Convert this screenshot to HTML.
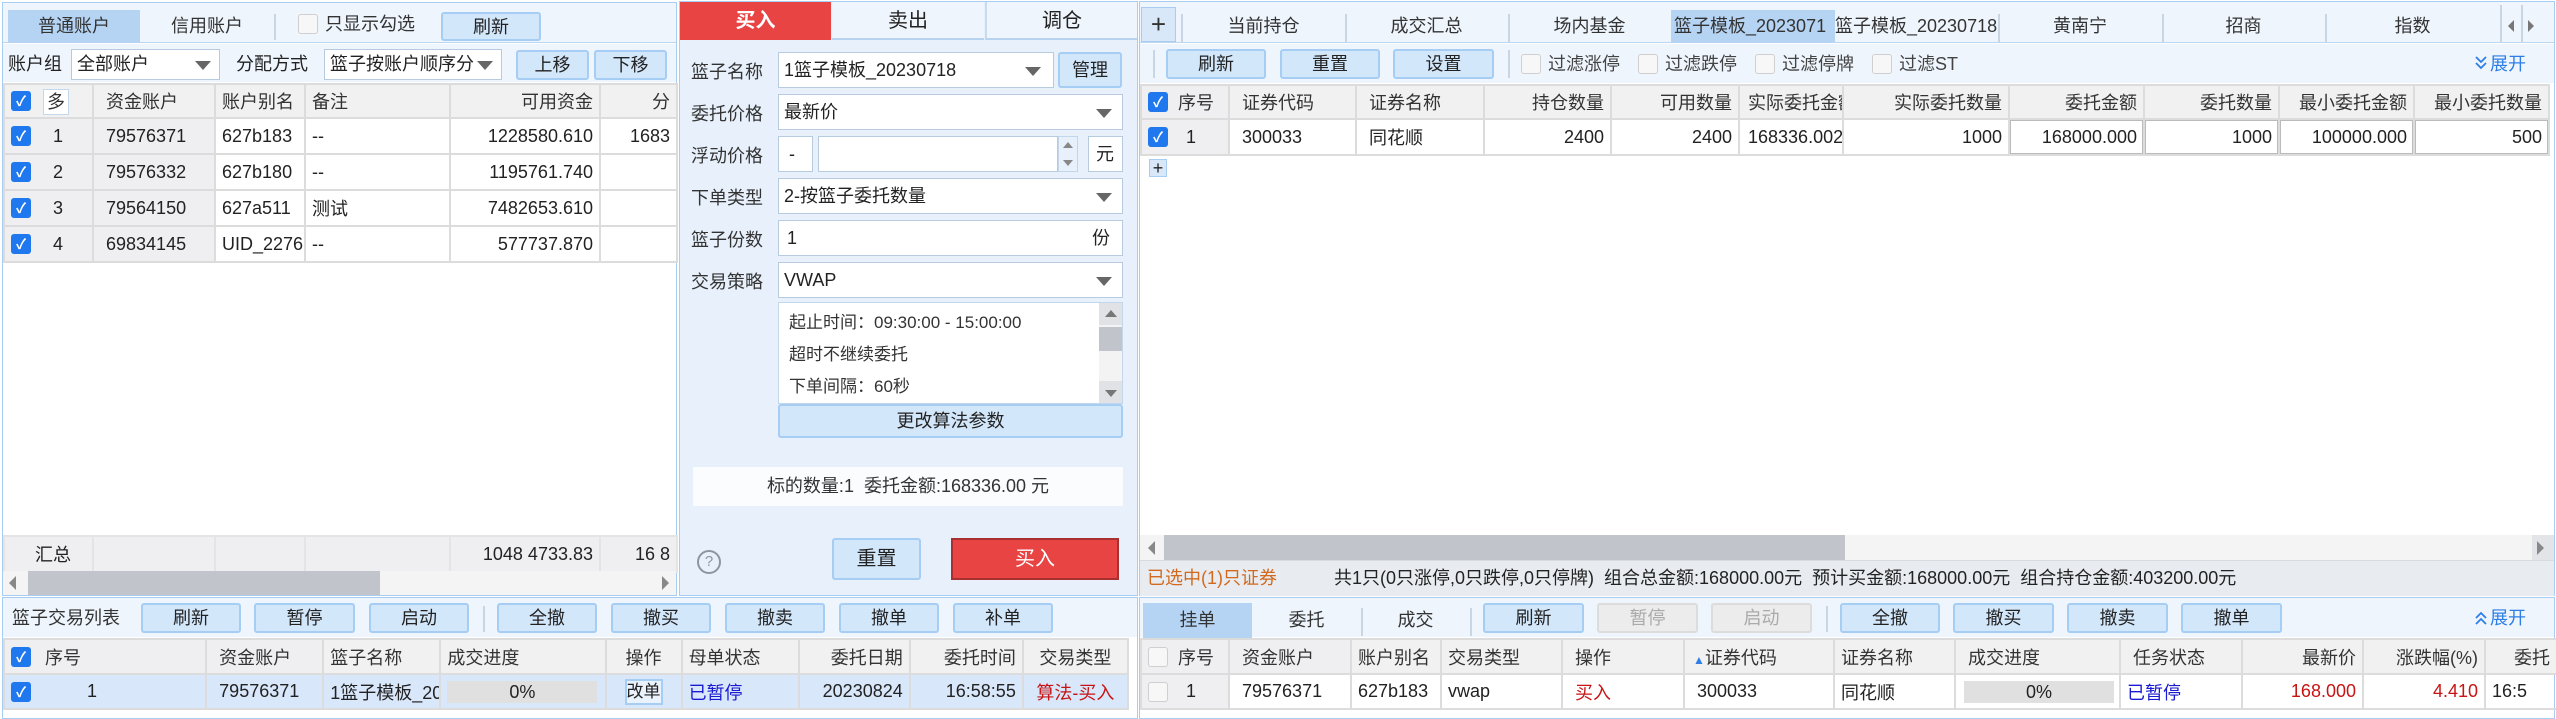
<!DOCTYPE html>
<html><head><meta charset="utf-8">
<style>
*{box-sizing:border-box;margin:0;padding:0}
body{width:2556px;height:719px;overflow:hidden;background:#fff;font-family:"Liberation Sans","Noto Sans CJK SC",sans-serif;font-size:18px;color:#222;position:relative}
.a{position:absolute}
.btn{position:absolute;background:#d3e7fb;border:2px solid #a6cdf4;border-radius:3px;text-align:center;font-size:18px;color:#222;line-height:26px}
.dis{background:#ececec;border-color:#dcdcdc;color:#aaa}
.cb{position:absolute;width:20px;height:20px;border-radius:3px;background:#1f78ee;color:#fff;font-size:14px;line-height:20px;text-align:center;font-weight:bold}
.cbe{position:absolute;width:20px;height:20px;border-radius:3px;background:#f7f7f7;border:1px solid #cfcfcf}
table{position:absolute;border-collapse:collapse;table-layout:fixed}
td{border:2px solid #dcdcdc;white-space:nowrap;overflow:hidden;padding:0 6px;font-size:18px}
.hd td{background:#f1f1f1;color:#333}
.g{background:#efeff2!important}
.r{text-align:right}
.c{text-align:center}
.tab{position:absolute;text-align:center;font-size:18px;color:#333}
.inp{position:absolute;background:#fff;border:1px solid #b7cbe0;font-size:18px;padding-left:14px}
.dd{position:absolute;right:14px;top:14px;width:0;height:0;border-left:8px solid transparent;border-right:8px solid transparent;border-top:9px solid #666}
.lbl{position:absolute;left:691px;font-size:18px;color:#333}
.sep{position:absolute;width:2px;background:#c8d6e4}
</style></head><body>

<!-- ============ LEFT TOP PANEL ============ -->
<div class="a" style="left:2px;top:2px;width:675px;height:594px;border:1px solid #a9cdf0;background:#fff"></div>
<div class="a" style="left:3px;top:3px;width:673px;height:40px;background:#eef5fd;border-bottom:1px solid #bcd6ef"></div>
<div class="tab" style="left:8px;top:10px;width:132px;height:33px;background:#b5d4f4;line-height:33px">普通账户</div>
<div class="tab" style="left:140px;top:10px;width:134px;height:33px;line-height:33px">信用账户</div>
<div class="sep" style="left:274px;top:14px;height:26px"></div>
<div class="cbe" style="left:298px;top:14px"></div>
<div class="a" style="left:325px;top:12px;line-height:24px;color:#333">只显示勾选</div>
<div class="btn" style="left:441px;top:12px;width:100px;height:29px">刷新</div>

<div class="a" style="left:3px;top:44px;width:673px;height:38px;background:#eef5fd"></div>
<div class="a" style="left:8px;top:52px;line-height:24px">账户组</div>
<div class="inp" style="left:71px;top:49px;width:149px;height:31px;line-height:29px;padding-left:5px">全部账户<div class="dd" style="right:8px;top:11px"></div></div>
<div class="a" style="left:236px;top:52px;line-height:24px">分配方式</div>
<div class="inp" style="left:324px;top:49px;width:178px;height:31px;line-height:29px;padding-left:5px;overflow:hidden;white-space:nowrap">篮子按账户顺序分<div class="dd" style="right:8px;top:11px"></div></div>
<div class="btn" style="left:516px;top:50px;width:73px;height:30px">上移</div>
<div class="btn" style="left:594px;top:50px;width:73px;height:30px">下移</div>

<table style="left:3px;top:83px;width:673px">
<colgroup><col style="width:89px"><col style="width:122px"><col style="width:90px"><col style="width:145px"><col style="width:150px"><col style="width:77px"></colgroup>
<tr class="hd" style="height:34px"><td style="position:relative"><div class="cb" style="left:6px;top:6px">✓</div><div class="a" style="left:38px;top:4px;width:26px;height:26px;background:#fff;border:1px solid #c4d8ee;text-align:center;line-height:24px">多</div></td><td style="padding-left:12px">资金账户</td><td>账户别名</td><td>备注</td><td class="r">可用资金</td><td class="r">分</td></tr>
<tr style="height:36px"><td class="g" style="position:relative"><div class="cb" style="left:6px;top:7px">✓</div><span style="margin-left:42px">1</span></td><td class="g" style="padding-left:12px">79576371</td><td>627b183</td><td>--</td><td class="r">1228580.610</td><td class="r">1683</td></tr>
<tr style="height:36px"><td class="g" style="position:relative"><div class="cb" style="left:6px;top:7px">✓</div><span style="margin-left:42px">2</span></td><td class="g" style="padding-left:12px">79576332</td><td>627b180</td><td>--</td><td class="r">1195761.740</td><td></td></tr>
<tr style="height:36px"><td class="g" style="position:relative"><div class="cb" style="left:6px;top:7px">✓</div><span style="margin-left:42px">3</span></td><td class="g" style="padding-left:12px">79564150</td><td>627a511</td><td>测试</td><td class="r">7482653.610</td><td></td></tr>
<tr style="height:36px"><td class="g" style="position:relative"><div class="cb" style="left:6px;top:7px">✓</div><span style="margin-left:42px">4</span></td><td class="g" style="padding-left:12px">69834145</td><td>UID_2276</td><td>--</td><td class="r">577737.870</td><td></td></tr>
</table>

<table style="left:3px;top:535px;width:673px">
<colgroup><col style="width:89px"><col style="width:122px"><col style="width:90px"><col style="width:145px"><col style="width:150px"><col style="width:77px"></colgroup>
<tr style="height:36px"><td class="g" style="border-color:#e4e4e4;padding-left:30px">汇总</td><td class="g" style="border-color:#e4e4e4"></td><td class="g" style="border-color:#e4e4e4"></td><td class="g" style="border-color:#e4e4e4"></td><td class="g r" style="border-color:#e4e4e4">1048 4733.83</td><td class="g r" style="border-color:#e4e4e4">16 8</td></tr>
</table>
<div class="a" style="left:3px;top:571px;width:673px;height:24px;background:#f4f4f4"></div>
<div class="a" style="left:28px;top:571px;width:352px;height:24px;background:#c1c5cb"></div>
<div class="a" style="left:9px;top:576px;border-top:7px solid transparent;border-bottom:7px solid transparent;border-right:7px solid #888"></div>
<div class="a" style="left:662px;top:576px;border-top:7px solid transparent;border-bottom:7px solid transparent;border-left:7px solid #888"></div>

<!-- ============ MIDDLE PANEL ============ -->
<div class="a" style="left:679px;top:1px;width:459px;height:595px;background:#e7f0fb;border:1px solid #a9cdf0"></div>
<div class="a" style="left:680px;top:2px;width:151px;height:38px;background:#e84444;color:#fff;font-weight:bold;font-size:20px;text-align:center;line-height:38px">买入</div>
<div class="a" style="left:832px;top:2px;width:152px;height:38px;background:#eef5fd;font-size:20px;text-align:center;line-height:38px;border-bottom:2px solid #b7d3ef">卖出</div>
<div class="a" style="left:985px;top:2px;width:152px;height:38px;background:#eef5fd;font-size:20px;text-align:center;line-height:38px;border-bottom:2px solid #b7d3ef;border-left:2px solid #c8dbee">调仓</div>

<div class="lbl" style="top:58px">篮子名称</div>
<div class="inp" style="left:778px;top:52px;width:276px;height:36px;line-height:34px;padding-left:5px">1篮子模板_20230718<div class="dd" style="right:12px;top:14px"></div></div>
<div class="btn" style="left:1058px;top:52px;width:64px;height:36px;line-height:32px">管理</div>

<div class="lbl" style="top:100px">委托价格</div>
<div class="inp" style="left:778px;top:94px;width:345px;height:36px;line-height:34px;padding-left:5px">最新价<div class="dd" style="right:10px;top:14px"></div></div>

<div class="lbl" style="top:142px">浮动价格</div>
<div class="inp" style="left:778px;top:136px;width:35px;height:36px;line-height:34px;padding-left:10px">-</div>
<div class="inp" style="left:818px;top:136px;width:240px;height:36px"></div>
<div class="a" style="left:1058px;top:136px;width:20px;height:36px;background:#e7f0fb;border:1px solid #c3d7ec"></div>
<div class="a" style="left:1063px;top:142px;border-left:5px solid transparent;border-right:5px solid transparent;border-bottom:6px solid #888"></div>
<div class="a" style="left:1063px;top:160px;border-left:5px solid transparent;border-right:5px solid transparent;border-top:6px solid #888"></div>
<div class="inp" style="left:1088px;top:136px;width:35px;height:36px;line-height:34px;padding-left:7px">元</div>

<div class="lbl" style="top:184px">下单类型</div>
<div class="inp" style="left:778px;top:178px;width:345px;height:36px;line-height:34px;padding-left:5px">2-按篮子委托数量<div class="dd" style="right:10px;top:14px"></div></div>

<div class="lbl" style="top:226px">篮子份数</div>
<div class="inp" style="left:778px;top:220px;width:345px;height:36px;line-height:34px;padding-left:8px">1<span style="position:absolute;right:12px">份</span></div>

<div class="lbl" style="top:268px">交易策略</div>
<div class="inp" style="left:778px;top:262px;width:345px;height:36px;line-height:34px;padding-left:5px">VWAP<div class="dd" style="right:10px;top:14px"></div></div>

<div class="a" style="left:778px;top:302px;width:345px;height:102px;background:#fff;border:1px solid #c3d7ec;overflow:hidden">
<div class="a" style="left:10px;top:4px;line-height:32px;font-size:17px;color:#333">起止时间：09:30:00 - 15:00:00<br>超时不继续委托<br>下单间隔：60秒</div>
<div class="a" style="right:0;top:0;width:23px;height:102px;background:#f3f3f3"></div>
<div class="a" style="right:0;top:24px;width:23px;height:24px;background:#c1c5cb"></div>
<div class="a" style="right:0;top:0;width:23px;height:22px;background:#e0e2e5"></div>
<div class="a" style="right:0;top:78px;width:23px;height:24px;background:#e0e2e5"></div>
<div class="a" style="right:5px;top:7px;border-left:6px solid transparent;border-right:6px solid transparent;border-bottom:7px solid #777"></div>
<div class="a" style="right:5px;top:87px;border-left:6px solid transparent;border-right:6px solid transparent;border-top:7px solid #777"></div>
</div>
<div class="btn" style="left:778px;top:404px;width:345px;height:34px;line-height:30px">更改算法参数</div>

<div class="a" style="left:693px;top:467px;width:430px;height:39px;background:#fbfcfe;text-align:center;line-height:39px;color:#333">标的数量:1&nbsp;&nbsp;委托金额:168336.00 元</div>

<div class="a" style="left:697px;top:550px;width:24px;height:24px;border:2px solid #8d96a0;border-radius:50%;text-align:center;line-height:20px;font-size:15px;color:#8d96a0">?</div>
<div class="btn" style="left:832px;top:538px;width:89px;height:42px;line-height:38px;font-size:20px">重置</div>
<div class="a" style="left:951px;top:538px;width:168px;height:42px;background:#e84444;border:2px solid #a83030;color:#fff;text-align:center;line-height:38px;font-size:20px">买入</div>

<!-- ============ RIGHT TOP PANEL ============ -->
<div class="a" style="left:1139px;top:1px;width:1416px;height:595px;border:1px solid #a9cdf0;background:#fff"></div>
<div class="a" style="left:1140px;top:2px;width:1414px;height:41px;background:#eef5fd;border-bottom:1px solid #bcd6ef"></div>
<div class="a" style="left:1141px;top:7px;width:35px;height:35px;background:#d8e8f9;border:1px solid #a9cdf0;text-align:center;line-height:32px;font-size:26px;color:#333">+</div>
<div class="sep" style="left:1181px;top:14px;height:28px"></div>
<div class="tab" style="left:1182px;top:10px;width:163px;line-height:32px">当前持仓</div>
<div class="sep" style="left:1345px;top:14px;height:28px"></div>
<div class="tab" style="left:1345px;top:10px;width:163px;line-height:32px">成交汇总</div>
<div class="sep" style="left:1508px;top:14px;height:28px"></div>
<div class="tab" style="left:1508px;top:10px;width:163px;line-height:32px">场内基金</div>
<div class="tab" style="left:1671px;top:10px;width:164px;height:33px;line-height:32px;background:#b5d4f4;overflow:hidden;white-space:nowrap;text-align:left;padding-left:3px">篮子模板_2023071</div>
<div class="tab" style="left:1835px;top:10px;width:163px;line-height:32px;overflow:hidden;white-space:nowrap;text-align:left">篮子模板_20230718</div>
<div class="sep" style="left:1998px;top:14px;height:28px"></div>
<div class="tab" style="left:1998px;top:10px;width:164px;line-height:32px">黄南宁</div>
<div class="sep" style="left:2162px;top:14px;height:28px"></div>
<div class="tab" style="left:2162px;top:10px;width:163px;line-height:32px">招商</div>
<div class="sep" style="left:2325px;top:14px;height:28px"></div>
<div class="tab" style="left:2325px;top:10px;width:175px;line-height:32px">指数</div>
<div class="sep" style="left:2500px;top:5px;height:38px"></div>
<div class="a" style="left:2508px;top:20px;border-top:6px solid transparent;border-bottom:6px solid transparent;border-right:6px solid #777"></div>
<div class="sep" style="left:2521px;top:5px;height:38px"></div>
<div class="a" style="left:2528px;top:20px;border-top:6px solid transparent;border-bottom:6px solid transparent;border-left:6px solid #777"></div>

<div class="a" style="left:1140px;top:44px;width:1414px;height:39px;background:#eef5fd"></div>
<div class="sep" style="left:1153px;top:50px;height:28px"></div>
<div class="btn" style="left:1166px;top:49px;width:100px;height:30px">刷新</div>
<div class="btn" style="left:1280px;top:49px;width:100px;height:30px">重置</div>
<div class="btn" style="left:1393px;top:49px;width:101px;height:30px">设置</div>
<div class="sep" style="left:1508px;top:50px;height:28px"></div>
<div class="cbe" style="left:1521px;top:54px"></div><div class="a" style="left:1548px;top:52px;line-height:24px;color:#444">过滤涨停</div>
<div class="cbe" style="left:1638px;top:54px"></div><div class="a" style="left:1665px;top:52px;line-height:24px;color:#444">过滤跌停</div>
<div class="cbe" style="left:1755px;top:54px"></div><div class="a" style="left:1782px;top:52px;line-height:24px;color:#444">过滤停牌</div>
<div class="cbe" style="left:1872px;top:54px"></div><div class="a" style="left:1899px;top:52px;line-height:24px;color:#444">过滤ST</div>
<svg class="a" style="left:2474px;top:55px" width="14" height="16" viewBox="0 0 14 16"><path d="M2 2 L7 7 L12 2 M2 8 L7 13 L12 8" fill="none" stroke="#2d7ee6" stroke-width="1.8"/></svg>
<div class="a" style="left:2490px;top:52px;line-height:24px;color:#2d7ee6">展开</div>

<table style="left:1140px;top:84px;width:1408px">
<colgroup><col style="width:88px"><col style="width:127px"><col style="width:128px"><col style="width:127px"><col style="width:128px"><col style="width:104px"><col style="width:166px"><col style="width:135px"><col style="width:135px"><col style="width:135px"><col style="width:135px"></colgroup>
<tr class="hd" style="height:34px"><td class="g" style="position:relative"><div class="cb" style="left:6px;top:6px">✓</div><span style="margin-left:30px">序号</span></td><td style="padding-left:12px">证券代码</td><td style="padding-left:12px">证券名称</td><td class="r">持仓数量</td><td class="r">可用数量</td><td style="padding-left:8px">实际委托金额</td><td class="r">实际委托数量</td><td class="r">委托金额</td><td class="r">委托数量</td><td class="r">最小委托金额</td><td class="r">最小委托数量</td></tr>
<tr style="height:36px"><td class="g" style="position:relative"><div class="cb" style="left:6px;top:7px">✓</div><span style="margin-left:38px">1</span></td><td style="padding-left:12px">300033</td><td style="padding-left:12px">同花顺</td><td class="r">2400</td><td class="r">2400</td><td style="padding-left:8px">168336.002</td><td class="r">1000</td><td class="r" style="box-shadow:inset 0 0 0 1px #bbb">168000.000</td><td class="r" style="box-shadow:inset 0 0 0 1px #bbb">1000</td><td class="r" style="box-shadow:inset 0 0 0 1px #bbb">100000.000</td><td class="r" style="box-shadow:inset 0 0 0 1px #bbb">500</td></tr>
</table>
<div class="a" style="left:1149px;top:159px;width:18px;height:18px;background:#d8e8f9;border:1px solid #a9cdf0;text-align:center;line-height:16px;font-size:18px">+</div>

<div class="a" style="left:1140px;top:535px;width:1414px;height:25px;background:#f4f4f4"></div>
<div class="a" style="left:1164px;top:535px;width:681px;height:25px;background:#c1c5cb"></div>
<div class="a" style="left:1148px;top:541px;border-top:7px solid transparent;border-bottom:7px solid transparent;border-right:7px solid #888"></div>
<div class="a" style="left:2532px;top:535px;width:22px;height:25px;background:#e2e4e7"></div>
<div class="a" style="left:2537px;top:541px;border-top:7px solid transparent;border-bottom:7px solid transparent;border-left:7px solid #888"></div>
<div class="a" style="left:1140px;top:560px;width:1414px;height:36px;background:#e8ecf0;border-top:1px solid #d6dce2"></div>
<div class="a" style="left:1147px;top:566px;line-height:24px;color:#d2691e">已选中(1)只证券</div>
<div class="a" style="left:1334px;top:566px;line-height:24px;color:#222;white-space:nowrap">共1只(0只涨停,0只跌停,0只停牌)&nbsp;&nbsp;组合总金额:168000.00元&nbsp;&nbsp;预计买金额:168000.00元&nbsp;&nbsp;组合持仓金额:403200.00元</div>

<!-- ============ BOTTOM LEFT PANEL ============ -->
<div class="a" style="left:2px;top:597px;width:1136px;height:122px;border:1px solid #a9cdf0;background:#fff"></div>
<div class="a" style="left:3px;top:598px;width:1134px;height:39px;background:#eef5fd"></div>
<div class="a" style="left:12px;top:606px;line-height:24px;color:#333">篮子交易列表</div>
<div class="btn" style="left:141px;top:603px;width:100px;height:30px">刷新</div>
<div class="btn" style="left:254px;top:603px;width:101px;height:30px">暂停</div>
<div class="btn" style="left:369px;top:603px;width:100px;height:30px">启动</div>
<div class="sep" style="left:483px;top:606px;height:26px"></div>
<div class="btn" style="left:497px;top:603px;width:100px;height:30px">全撤</div>
<div class="btn" style="left:611px;top:603px;width:100px;height:30px">撤买</div>
<div class="btn" style="left:725px;top:603px;width:100px;height:30px">撤卖</div>
<div class="btn" style="left:839px;top:603px;width:100px;height:30px">撤单</div>
<div class="btn" style="left:953px;top:603px;width:100px;height:30px">补单</div>

<table style="left:3px;top:638px;width:1126px">
<colgroup><col style="width:202px"><col style="width:117px"><col style="width:117px"><col style="width:165px"><col style="width:76px"><col style="width:117px"><col style="width:111px"><col style="width:113px"><col style="width:105px"></colgroup>
<tr class="hd" style="height:35px"><td class="g" style="position:relative"><div class="cb" style="left:6px;top:7px">✓</div><span style="margin-left:34px">序号</span></td><td class="g" style="padding-left:12px">资金账户</td><td>篮子名称</td><td>成交进度</td><td class="c">操作</td><td>母单状态</td><td class="r">委托日期</td><td class="r">委托时间</td><td class="c">交易类型</td></tr>
<tr style="height:35px;background:#d9e7fb"><td style="position:relative"><div class="cb" style="left:6px;top:7px">✓</div><span style="margin-left:76px">1</span></td><td style="padding-left:12px">79576371</td><td>1篮子模板_20230718</td><td style="position:relative"><div class="a" style="left:6px;top:6px;width:150px;height:22px;background:#e0e0e0;text-align:center;line-height:22px">0%</div></td><td style="padding:0 4px"><div style="height:26px;border:2px solid #a6cdf4;background:#eaf3fd;line-height:22px;font-size:17px;text-align:center;width:38px;margin:0 auto;overflow:hidden">改单</div></td><td style="color:#1a1ad0">已暂停</td><td class="r">20230824</td><td class="r">16:58:55</td><td class="c" style="color:#c81414">算法-买入</td></tr>
</table>

<!-- ============ BOTTOM RIGHT PANEL ============ -->
<div class="a" style="left:1139px;top:597px;width:1416px;height:122px;border:1px solid #a9cdf0;background:#fff"></div>
<div class="a" style="left:1140px;top:598px;width:1414px;height:39px;background:#eef5fd"></div>
<div class="tab" style="left:1143px;top:603px;width:109px;height:35px;line-height:34px;background:#b5d4f4">挂单</div>
<div class="tab" style="left:1252px;top:603px;width:109px;line-height:34px">委托</div>
<div class="sep" style="left:1361px;top:608px;height:28px"></div>
<div class="tab" style="left:1361px;top:603px;width:109px;line-height:34px">成交</div>
<div class="sep" style="left:1470px;top:608px;height:28px"></div>
<div class="btn" style="left:1483px;top:603px;width:101px;height:30px">刷新</div>
<div class="btn dis" style="left:1597px;top:603px;width:101px;height:30px">暂停</div>
<div class="btn dis" style="left:1711px;top:603px;width:101px;height:30px">启动</div>
<div class="sep" style="left:1826px;top:606px;height:26px"></div>
<div class="btn" style="left:1840px;top:603px;width:100px;height:30px">全撤</div>
<div class="btn" style="left:1953px;top:603px;width:101px;height:30px">撤买</div>
<div class="btn" style="left:2067px;top:603px;width:101px;height:30px">撤卖</div>
<div class="btn" style="left:2181px;top:603px;width:101px;height:30px">撤单</div>
<svg class="a" style="left:2474px;top:610px" width="14" height="16" viewBox="0 0 14 16"><path d="M2 8 L7 3 L12 8 M2 14 L7 9 L12 14" fill="none" stroke="#2d7ee6" stroke-width="1.8"/></svg>
<div class="a" style="left:2490px;top:606px;line-height:24px;color:#2d7ee6">展开</div>

<table style="left:1140px;top:638px;width:1416px">
<colgroup><col style="width:88px"><col style="width:122px"><col style="width:90px"><col style="width:121px"><col style="width:122px"><col style="width:150px"><col style="width:121px"><col style="width:165px"><col style="width:122px"><col style="width:121px"><col style="width:122px"><col style="width:72px"></colgroup>
<tr class="hd" style="height:35px"><td class="g" style="position:relative"><div class="cbe" style="left:6px;top:7px"></div><span style="margin-left:30px">序号</span></td><td class="g" style="padding-left:12px">资金账户</td><td>账户别名</td><td>交易类型</td><td style="padding-left:12px">操作</td><td style="padding-left:8px"><span style="color:#2d7ee6;font-size:12px">▲</span>证券代码</td><td>证券名称</td><td style="padding-left:12px">成交进度</td><td style="padding-left:12px">任务状态</td><td class="r">最新价</td><td class="r">涨跌幅(%)</td><td class="r">委托</td></tr>
<tr style="height:35px"><td class="g" style="position:relative"><div class="cbe" style="left:6px;top:7px"></div><span style="margin-left:38px">1</span></td><td style="padding-left:12px">79576371</td><td>627b183</td><td>vwap</td><td style="padding-left:12px;color:#c81414">买入</td><td style="padding-left:12px">300033</td><td>同花顺</td><td style="position:relative"><div class="a" style="left:8px;top:6px;width:150px;height:22px;background:#e0e0e0;text-align:center;line-height:22px">0%</div></td><td style="color:#1a1ad0">已暂停</td><td class="r" style="color:#c81414">168.000</td><td class="r" style="color:#c81414">4.410</td><td>16:5</td></tr>
</table>

</body></html>
